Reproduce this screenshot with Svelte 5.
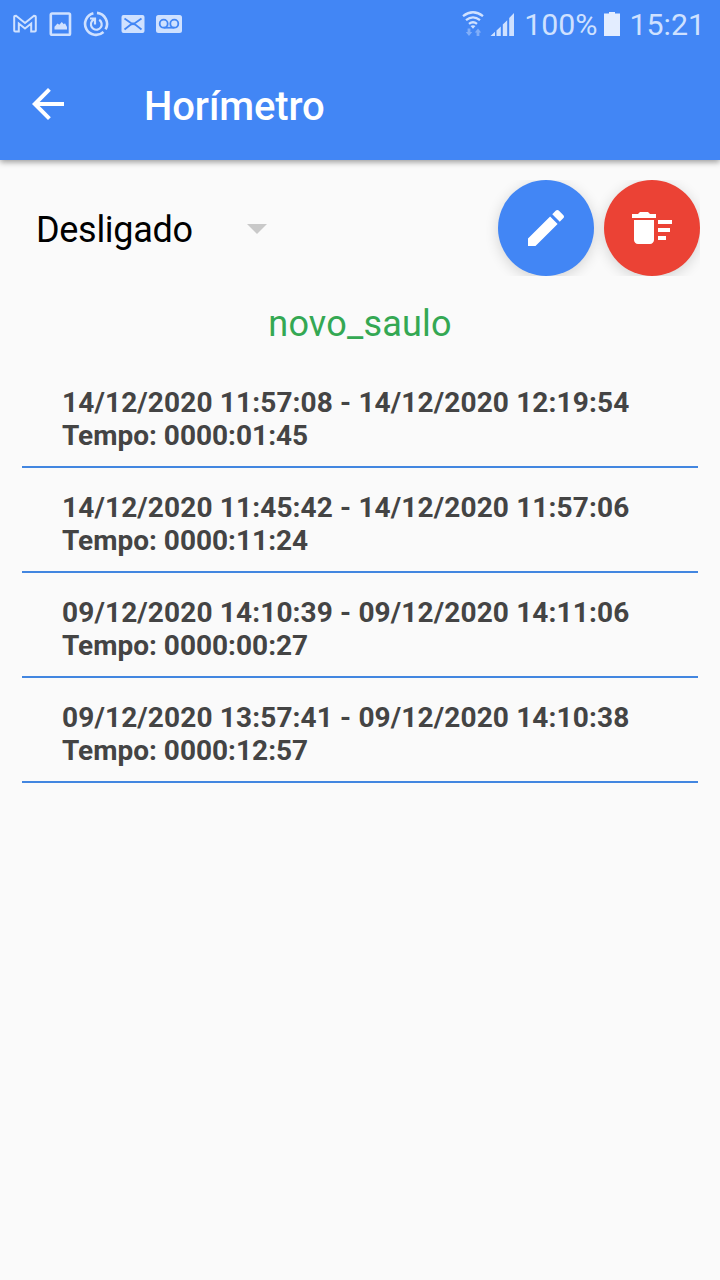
<script lang="ts">
  interface Period {
    start: string;
    end: string;
    time: string;
  }

  const device = "novo_saulo";
  const periods: Period[] = [
    { start: "14/12/2020 11:57:08", end: "14/12/2020 12:19:54", time: "0000:01:45" },
    { start: "14/12/2020 11:45:42", end: "14/12/2020 11:57:06", time: "0000:11:24" },
    { start: "09/12/2020 14:10:39", end: "09/12/2020 14:11:06", time: "0000:00:27" },
    { start: "09/12/2020 13:57:41", end: "09/12/2020 14:10:38", time: "0000:12:57" },
  ];
</script>

<div class="screen">
  <header>
    <div class="status">
      <div class="notifications">
        <svg width="24" height="24" viewBox="0 0 24 24" aria-hidden="true">
          <path class="line" d="M1.200 18.500V5.200Q1.200 3.800 3 3.800L12 11l9-7.200q1.800 0 1.800 1.400v13.300q0 .9-1 .9h-3.600V11.500L12 16.500 5.800 11.500v7.900H2.200q-1 0-1-.9z" stroke-width="2" />
        </svg>
        <svg width="24" height="24" viewBox="0 0 24 24" aria-hidden="true">
          <rect class="line" x="2.800" y="1.500" width="19.200" height="21.400" rx="1.200" stroke-width="2.600" />
          <path d="M6.500 17.500v-2.700l3-3.300 1.800 1.200 2.500-2.700 2 2.300 1.200-1 2 3.600v2.600z" />
        </svg>
        <svg width="26" height="26" viewBox="0 0 26 26" aria-hidden="true">
          <path class="line" d="M10.400 2.200A11 11 0 1 0 20.500 21M14 1.900A11.100 11.100 0 0 1 22.600 18.400" stroke-width="2.600" />
          <path class="line" d="M16.200 8.800a5.400 5.400 0 1 1-7.500 1.700l2.600-2.700M7 7.500h5v6" stroke-width="2.200" />
        </svg>
        <svg width="24" height="24" viewBox="0 0 24 24" aria-hidden="true">
          <rect x="0.500" y="3" width="23" height="18" rx="2" />
          <path class="cut" d="M3.500 6.600l6 4.200q2.500 1.400 5 0l6-4.200M3.500 17.500l6-4.800q2.500-1.400 5 0l6 4.800" />
        </svg>
        <svg width="26" height="24" viewBox="0 0 26 24" aria-hidden="true">
          <rect x="0" y="3" width="26" height="18" rx="2.500" />
          <circle class="cut" cx="7.700" cy="11.700" r="4" />
          <circle class="cut" cx="18.300" cy="11.700" r="4" />
          <path class="cut" d="M7.700 15.700h10.600" />
        </svg>
      </div>
      <div class="system">
        <svg class="wifi" width="22" height="26" viewBox="0 0 22 26" aria-hidden="true">
          <path class="line" d="M1 5.200q10-7.800 20 0M4 9.200q7-5.600 14 0M7 12.900q4-3.200 8 0" stroke-width="2.300" />
          <path d="M8.500 15q2.500-1.700 5 0L11 17.800z" />
          <path class="dim" d="M7 25l-3.200-4h1.800v-3.500h2.800V21h1.800zM16 17.500l3.200 4h-1.800V25h-2.800v-3.500h-1.800z" />
        </svg>
        <svg class="signal" width="26" height="26" viewBox="0 0 26 26" aria-hidden="true">
          <path d="M.500 25l4.500-4.200V25zM6.500 19.500l4.300-4V25H6.500zM12.800 13.500l4.400-4.300V25h-4.400zM19.200 7l4.800-5v23h-4.800z" />
        </svg>
        <span>100%</span>
        <svg class="battery" width="16" height="24" viewBox="0 0 16 24" aria-hidden="true">
          <path d="M5 0h6v1.500h5V24H0V1.500h5z" />
        </svg>
        <span>15:21</span>
      </div>
    </div>
    <div class="toolbar">
      <button class="back" aria-label="Voltar">
        <svg width="48" height="48" viewBox="0 0 24 24">
          <path d="M20 11H7.830l5.590-5.590L12 4l-8 8 8 8 1.410-1.410L7.830 13H20v-2z" />
        </svg>
      </button>
      <h1>Horímetro</h1>
    </div>
  </header>

  <main>
    <div class="controls">
      <button class="state">
        <span>Desligado</span>
        <svg width="20" height="10" viewBox="0 0 20 10" aria-hidden="true"><path d="M0 0h20L10 10z" /></svg>
      </button>
      <div class="actions">
        <button class="fab" aria-label="Editar">
          <svg width="48" height="48" viewBox="0 0 24 24">
            <path d="M3 17.250V21h3.750L17.810 9.940l-3.750-3.750L3 17.250zM20.710 7.040c.39-.39.39-1.020 0-1.410l-2.340-2.340c-.39-.39-1.020-.39-1.410 0l-1.830 1.830 3.750 3.750 1.830-1.830z" />
          </svg>
        </button>
        <button class="fab danger" aria-label="Limpar">
          <svg width="48" height="48" viewBox="0 0 24 24">
            <path d="M15 16h4v2h-4zm0-8h7v2h-7zm0 4h6v2h-6zM3 18c0 1.100.9 2 2 2h6c1.100 0 2-.9 2-2V8H3v10zM14 5h-3l-1-1H6L5 5H2v2h12z" />
          </svg>
        </button>
      </div>
    </div>

    <h2>{device}</h2>

    <ul>
      {#each periods as period}
        <li>
          <div class="range">{period.start} - {period.end}</div>
          <div>Tempo: {period.time}</div>
        </li>
      {/each}
    </ul>
  </main>
</div>

<style>
  :global(body) {
    margin: 0;
    background: #fafafa;
  }
  .screen {
    min-height: 1280px;
    background: #fafafa;
    font-family: Roboto, sans-serif;
  }
  svg {
    display: block;
    fill: currentColor;
    flex: none;
  }
  button {
    border: 0;
    padding: 0;
    background: none;
    color: inherit;
    font: inherit;
  }
  header {
    height: 160px;
    background: #4286f5;
    box-shadow: 0 2px 6px rgba(0, 0, 0, 0.4);
  }
  .status {
    display: flex;
    justify-content: space-between;
    align-items: center;
    height: 48px;
    padding: 0 15px 0 13px;
    box-sizing: border-box;
    color: #cfe1ff;
  }
  .notifications,
  .system {
    display: flex;
    align-items: center;
  }
  .notifications {
    gap: 11.2px;
  }
  .system {
    font-size: 30.3px;
    line-height: 48px;
  }
  .system span {
    padding-top: 2px;
    line-height: 46px;
  }
  .line {
    fill: none;
    stroke: currentColor;
  }
  .cut {
    fill: none;
    stroke: #4286f5;
    stroke-width: 1.8;
  }
  .dim {
    opacity: 0.45;
  }
  .wifi {
    margin-right: 6px;
  }
  .signal {
    margin-right: 8px;
  }
  .battery {
    margin: 0 10px 0 6px;
    color: #e3edff;
  }
  .toolbar {
    display: flex;
    align-items: center;
    height: 112px;
    padding-left: 24px;
    color: #fff;
  }
  h1 {
    margin: 5px 0 0 72px;
    font-size: 40px;
    font-weight: 500;
    line-height: 47px;
    letter-spacing: -0.1px;
  }
  main {
    padding: 20px 20px 0;
  }
  .controls {
    display: flex;
    justify-content: space-between;
    height: 96px;
  }
  .state {
    display: flex;
    align-items: center;
    gap: 54px;
    padding-left: 16px;
    font-size: 36px;
    letter-spacing: -0.3px;
    color: #000;
  }
  .state span {
    padding-top: 3px;
  }
  .state svg {
    margin-top: 1px;
    color: #c9c9c9;
  }
  /* the button shadows are cut off at the row's own edges */
  .actions {
    display: flex;
    gap: 10px;
    clip-path: inset(0 0 0 -20px);
  }
  .fab {
    display: flex;
    align-items: center;
    justify-content: center;
    width: 96px;
    height: 96px;
    border-radius: 50%;
    background: #4286f5;
    color: #fff;
    box-shadow: 0 3px 14px rgba(0, 0, 0, 0.16);
  }
  .danger {
    background: #eb4235;
  }
  h2 {
    margin: 27px 0 0;
    font-size: 36px;
    font-weight: 400;
    line-height: 42px;
    letter-spacing: 0.2px;
    text-align: center;
    color: #34a853;
  }
  ul {
    margin: 18px 2px 0;
    padding: 0;
    list-style: none;
  }
  li {
    padding: 23px 40px 14px;
    border-bottom: 2px solid #4286e0;
    font-size: 28px;
    font-weight: 700;
    line-height: 33px;
    color: #444;
  }
  .range {
    letter-spacing: 0.137px;
  }
</style>
